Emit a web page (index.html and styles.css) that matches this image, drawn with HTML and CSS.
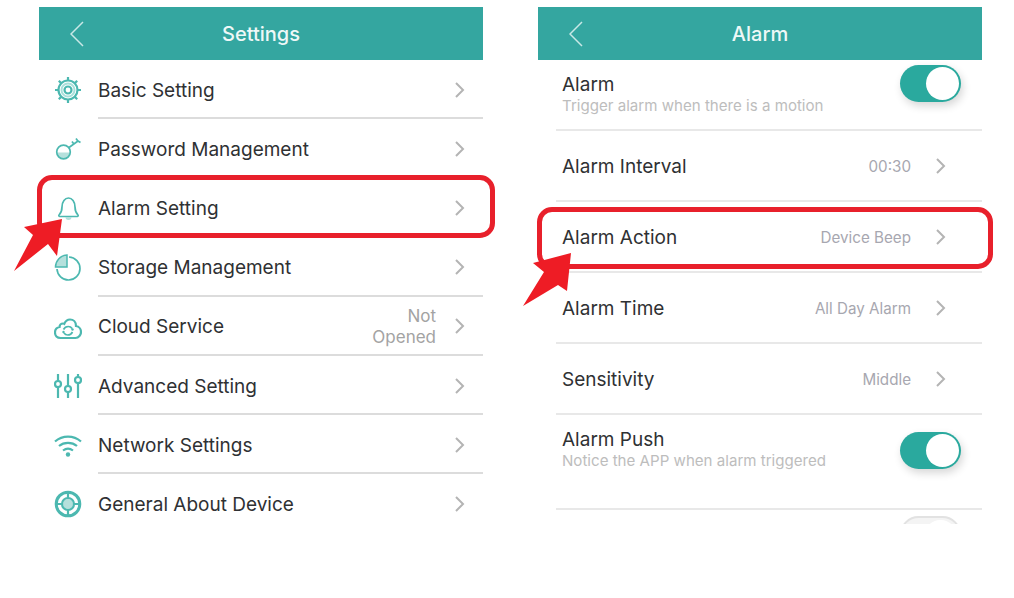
FILE: index.html
```html
<!DOCTYPE html>
<html lang="en">
<head>
    <meta charset="UTF-8">
    <title>Settings</title>
    <link rel="stylesheet" href="styles.css">
</head>
<body>
    <div class="page">
        <div class="screen screen-settings">
            <div class="header">
                <svg class="back" viewBox="0 0 14 26"><path d="M13 1 1 13l12 12"/></svg>
                <span>Settings</span>
            </div>
            <div class="menu">
                <div class="menu-row">
                    <svg class="icon" viewBox="0 0 28 28">
                        <circle class="thick" cx="14" cy="14" r="9.500"/>
                        <circle class="soft" cx="14" cy="14" r="6.500"/>
                        <circle class="thick" cx="14" cy="14" r="3.500"/>
                        <path class="thick" d="M14 1v4M14 23v4M1 14h4M23 14h4M4.800 4.800l2.800 2.800M20.400 20.400l2.800 2.800M4.800 23.200l2.800-2.800M20.400 7.600l2.800-2.800"/>
                    </svg>
                    <div class="menu-body"><span class="menu-label">Basic Setting</span><svg class="chev" viewBox="0 0 10 16"><path d="M1 1l7 7-7 7"/></svg></div>
                </div>
                <div class="menu-row">
                    <svg class="icon" viewBox="0 0 28 28">
                        <path class="soft-fill" d="M3 17.500h13a6.500 6.500 0 0 1-13 0z"/>
                        <circle cx="9.500" cy="17" r="6.800"/>
                        <path d="M15 12.500 24 6M20 9.300l-2-2.800M24 6.300l-2-2.800M24 6l2.500 1.500"/>
                    </svg>
                    <div class="menu-body"><span class="menu-label">Password Management</span><svg class="chev" viewBox="0 0 10 16"><path d="M1 1l7 7-7 7"/></svg></div>
                </div>
                <div class="menu-row">
                    <svg class="icon" viewBox="0 0 28 28">
                        <path d="M5 21c2-2 3-3.500 3-8 0-5.500 3-9 6.500-9s6.500 3.500 6.500 9c0 4.500 1 6 3 8 .5.500 0 1.500-.7 1.500H5.700C5 22.500 4.500 21.500 5 21z"/>
                        <path class="soft-fill" d="M11.500 23h6a3 3 0 0 1-6 0z"/>
                    </svg>
                    <div class="menu-body"><span class="menu-label">Alarm Setting</span><svg class="chev" viewBox="0 0 10 16"><path d="M1 1l7 7-7 7"/></svg></div>
                </div>
                <div class="menu-row">
                    <svg class="icon" viewBox="0 0 28 28">
                        <path d="M15 3a11.500 11.500 0 1 1-12 12"/>
                        <path class="wedge" d="M13 1v12H1.500C1.500 7 6 1.500 13 1z"/>
                    </svg>
                    <div class="menu-body"><span class="menu-label">Storage Management</span><svg class="chev" viewBox="0 0 10 16"><path d="M1 1l7 7-7 7"/></svg></div>
                </div>
                <div class="menu-row">
                    <svg class="icon" viewBox="0 0 28 28">
                        <path class="thick" d="M6.500 25C3 25 1 22.500 1 19.500S3 14.500 5.500 14c0-1.800 1.500-3.500 3.500-3.500.5 0 1 .1 1.300.3C11.500 8 13.500 6.500 16 6.500c3.500 0 6 2.700 6 6.500 3 .5 5 3.200 5 6s-2.300 6-5.500 6z"/>
                        <path d="M9.500 16.500c1-2 3-3 4.800-3 1.500 0 3 .8 3.800 2M18.500 19c-1 2-3 3-4.700 3-1.600 0-3-.8-3.800-2"/>
                        <circle class="dot" cx="18.500" cy="16.500" r="1.200"/>
                        <circle class="dot" cx="9.500" cy="19" r="1.200"/>
                    </svg>
                    <div class="menu-body"><span class="menu-label">Cloud Service</span><span class="menu-value">Not<br>Opened</span><svg class="chev" viewBox="0 0 10 16"><path d="M1 1l7 7-7 7"/></svg></div>
                </div>
                <div class="menu-row">
                    <svg class="icon" viewBox="0 0 28 28">
                        <path class="thick" d="M4 2v24M14 2v24M24 2v24"/>
                        <circle class="knob" cx="4" cy="12" r="3"/>
                        <circle class="knob" cx="14" cy="17" r="3"/>
                        <circle class="knob" cx="24" cy="8" r="3"/>
                    </svg>
                    <div class="menu-body"><span class="menu-label">Advanced Setting</span><svg class="chev" viewBox="0 0 10 16"><path d="M1 1l7 7-7 7"/></svg></div>
                </div>
                <div class="menu-row">
                    <svg class="icon" viewBox="0 0 28 28">
                        <path class="thick" d="M1 10.500c7.500-6.500 18.500-6.500 26 0M5 15c5-4.200 13-4.200 18 0M9 19.500c3-2.300 7-2.300 10 0"/>
                        <circle class="dot" cx="14" cy="23.500" r="2.200"/>
                    </svg>
                    <div class="menu-body"><span class="menu-label">Network Settings</span><svg class="chev" viewBox="0 0 10 16"><path d="M1 1l7 7-7 7"/></svg></div>
                </div>
                <div class="menu-row">
                    <svg class="icon" viewBox="0 0 28 28">
                        <circle class="ring" cx="14" cy="14" r="11.800"/>
                        <circle class="soft-fill" cx="14" cy="14" r="5"/>
                        <circle class="thick" cx="14" cy="14" r="6"/>
                        <path class="thick" d="M14 2v6M14 20v6M2 14h6M20 14h6"/>
                    </svg>
                    <div class="menu-body"><span class="menu-label">General About Device</span><svg class="chev" viewBox="0 0 10 16"><path d="M1 1l7 7-7 7"/></svg></div>
                </div>
            </div>
            <div class="highlight highlight-settings"></div>
            <svg class="arrow arrow-settings" viewBox="0 0 50 54"><path d="M48 0 10 8 19 16 0 52 34 25 43 37z"/></svg>
        </div>

        <div class="screen screen-alarm">
            <div class="header">
                <svg class="back" viewBox="0 0 14 26"><path d="M13 1 1 13l12 12"/></svg>
                <span>Alarm</span>
            </div>
            <div class="alarm-list">
                <div class="alarm-row alarm-first">
                    <div class="alarm-text"><div class="alarm-label">Alarm</div><div class="alarm-hint">Trigger alarm when there is a motion</div></div>
                    <div class="switch"><div class="switch-knob"></div></div>
                </div>
                <div class="alarm-row alarm-plain">
                    <div class="alarm-label">Alarm Interval</div>
                    <span class="alarm-value">00:30</span><svg class="chev" viewBox="0 0 10 16"><path d="M1 1l7 7-7 7"/></svg>
                </div>
                <div class="alarm-row alarm-plain">
                    <div class="alarm-label">Alarm Action</div>
                    <span class="alarm-value">Device Beep</span><svg class="chev" viewBox="0 0 10 16"><path d="M1 1l7 7-7 7"/></svg>
                </div>
                <div class="alarm-row alarm-plain">
                    <div class="alarm-label">Alarm Time</div>
                    <span class="alarm-value">All Day Alarm</span><svg class="chev" viewBox="0 0 10 16"><path d="M1 1l7 7-7 7"/></svg>
                </div>
                <div class="alarm-row alarm-plain">
                    <div class="alarm-label">Sensitivity</div>
                    <span class="alarm-value">Middle</span><svg class="chev" viewBox="0 0 10 16"><path d="M1 1l7 7-7 7"/></svg>
                </div>
                <div class="alarm-row alarm-push">
                    <div class="alarm-text"><div class="alarm-label">Alarm Push</div><div class="alarm-hint">Notice the APP when alarm triggered</div></div>
                    <div class="switch switch-push"><div class="switch-knob"></div></div>
                </div>
                <div class="alarm-row alarm-cut">
                    <div class="alarm-label alarm-label-cut">Message Push</div>
                    <div class="switch switch-off"><div class="switch-knob"></div></div>
                </div>
            </div>
            <div class="highlight highlight-alarm"></div>
            <svg class="arrow arrow-alarm" viewBox="0 0 50 54"><path d="M48 0 10 10 21 19 0 53 35 32 44 38z"/></svg>
        </div>
    </div>
</body>
</html>
```

FILE: styles.css
```css
* {
    margin: 0;
    padding: 0;
    box-sizing: border-box;
}

body {
    font-family: 'Inter', 'Liberation Sans', sans-serif;
    background: #fff;
    color: #2f3133;
}

.page {
    display: flex;
    gap: 55px;
    padding: 7px 0 0 39px;
}

.screen {
    position: relative;
    width: 444px;
}

.screen-alarm {
    height: 519px;
}

.header {
    position: relative;
    height: 53px;
    background: #34a6a0;
    color: #eef8f7;
    font-size: 20px;
    font-weight: 500;
    display: flex;
    align-items: center;
    justify-content: center;
}

.back {
    position: absolute;
    left: 31px;
    top: 14px;
    width: 14px;
    height: 26px;
    fill: none;
    stroke: #c9e8e6;
    stroke-width: 1.5;
}

/* settings list */
.menu-row {
    display: flex;
    align-items: stretch;
    height: 59.2px;
}

.icon {
    flex: none;
    width: 28px;
    height: 28px;
    margin: 16px 16px 0 15px;
    fill: none;
    stroke: #4cb8b0;
    stroke-width: 1.7;
}

.icon .thick {
    stroke-width: 2.2;
}

.icon .ring {
    stroke-width: 3;
}

.icon .soft {
    stroke: #a9e0db;
    stroke-width: 2;
}

.icon .soft-fill {
    fill: #b5e0dc;
    stroke: none;
}

.icon .wedge {
    fill: #b5e0dc;
    stroke-width: 1.5;
}

.icon .dot {
    fill: #4cb8b0;
    stroke: none;
}

.icon .knob {
    fill: #fff;
    stroke-width: 2.2;
}

.menu-body {
    flex: 1;
    display: flex;
    align-items: center;
    border-bottom: 2px solid #dcdcdc;
    padding: 2px 18px 0 0;
}

.menu-row:last-child .menu-body {
    border-bottom-color: transparent;
}

.menu-label {
    flex: 1;
    font-size: 19px;
    line-height: 24px;
    padding-top: 2px;
}

.menu-value {
    font-size: 17px;
    line-height: 21px;
    color: #a3a3a3;
    text-align: right;
    margin-right: 19px;
    padding-top: 1px;
}

.chev {
    flex: none;
    width: 10px;
    height: 16px;
    fill: none;
    stroke: #b4b4b4;
    stroke-width: 2;
}

/* alarm list */
.alarm-list {
    height: 464px;
    overflow: hidden;
}

.alarm-row {
    display: flex;
    align-items: center;
    margin-left: 18px;
    padding: 0 36px 0 6px;
    border-bottom: 2px solid #e8e8e8;
}

.alarm-first {
    height: 71px;
    padding-right: 21px;
    align-items: flex-start;
    justify-content: space-between;
    padding-top: 5px;
}

.alarm-plain {
    height: 71px;
    padding-top: 1px;
}

.alarm-plain .alarm-label {
    padding-top: 2px;
}

.alarm-push {
    height: 95px;
    padding-right: 21px;
    padding-top: 5px;
    align-items: flex-start;
    justify-content: space-between;
}

.alarm-cut {
    height: 60px;
    padding-right: 21px;
    padding-top: 6px;
    align-items: flex-start;
    justify-content: space-between;
}

.alarm-label {
    flex: 1;
    font-size: 19px;
    line-height: 24px;
}

.alarm-label-cut {
    margin-top: 5px;
}

.alarm-text {
    padding-top: 8px;
}

.alarm-hint {
    margin-top: -1px;
    font-size: 15.1px;
    line-height: 20px;
    color: #bdbdbd;
}

.alarm-value {
    font-size: 15.2px;
    color: #a7a7b0;
    margin-right: 25px;
}

.switch {
    position: relative;
    width: 61px;
    height: 37px;
    border-radius: 19px;
    background: #2aa99e;
    box-shadow: 2px 4px 8px rgba(0, 0, 0, 0.16);
}

.switch-push {
    margin-top: 12px;
}

.switch-knob {
    position: absolute;
    top: 2px;
    right: 2px;
    width: 33px;
    height: 33px;
    border-radius: 50%;
    background: #fff;
}

.switch-off {
    background: #f4f4f4;
    border: 2px solid #e2e2e2;
    box-shadow: none;
}

/* red annotations on top of the screens */
.highlight {
    position: absolute;
    border: 5px solid #e8202b;
    border-radius: 15px;
}

.highlight-settings {
    left: -2px;
    top: 168px;
    width: 458px;
    height: 63px;
}

.highlight-alarm {
    left: -1px;
    top: 200px;
    width: 456px;
    height: 62px;
}

.arrow {
    position: absolute;
    width: 50px;
    height: 54px;
    fill: #ee1c25;
}

.arrow-settings {
    left: -25px;
    top: 212px;
}

.arrow-alarm {
    left: -15px;
    top: 246px;
}
```
